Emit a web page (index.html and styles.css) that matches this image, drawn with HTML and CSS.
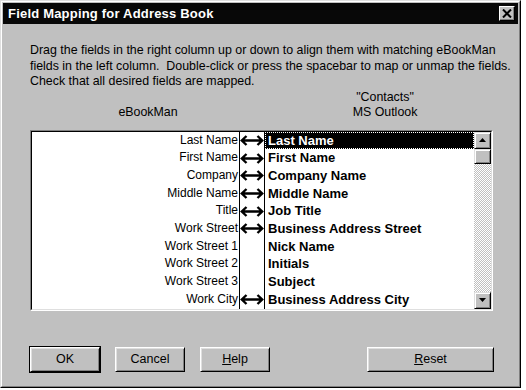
FILE: index.html
```html
<!DOCTYPE html>
<html>
<head>
<meta charset="utf-8">
<link rel="stylesheet" href="styles.css">
</head>
<body>
<div class="window">
  <div class="frame">
    <div class="titlebar">
      <span class="title">Field Mapping for Address Book</span>
      <span class="close">
        <svg width="10" height="9" viewBox="0 0 10 9"><path d="M1 0.5 L9 8.5 M9 0.5 L1 8.5" stroke="#000" stroke-width="2"/></svg>
      </span>
    </div>
    <div class="content">
      <p class="desc">Drag the fields in the right column up or down to align them with matching eBookMan<br>fields in the left column.&nbsp; Double-click or press the spacebar to map or unmap the fields.<br>Check that all desired fields are mapped.</p>
      <div class="headers">
        <div class="hdr"><br>eBookMan</div>
        <div class="hdr">"Contacts"<br>MS Outlook</div>
      </div>
      <div class="listbox">
        <div class="inner">
          <div class="col-left">
            <div class="cell">Last Name</div>
            <div class="cell">First Name</div>
            <div class="cell">Company</div>
            <div class="cell">Middle Name</div>
            <div class="cell">Title</div>
            <div class="cell">Work Street</div>
            <div class="cell">Work Street 1</div>
            <div class="cell">Work Street 2</div>
            <div class="cell">Work Street 3</div>
            <div class="cell">Work City</div>
          </div>
          <div class="col-arrow">
            <div class="cell"><svg class="arr" viewBox="0 0 24 11"><path d="M6.5 1 L1.8 5.5 L6.5 10 M1.8 5.5 H22.2 M17.5 1 L22.2 5.5 L17.5 10" fill="none" stroke="#000" stroke-width="2.4"/></svg></div>
            <div class="cell"><svg class="arr" viewBox="0 0 24 11"><path d="M6.5 1 L1.8 5.5 L6.5 10 M1.8 5.5 H22.2 M17.5 1 L22.2 5.5 L17.5 10" fill="none" stroke="#000" stroke-width="2.4"/></svg></div>
            <div class="cell"><svg class="arr" viewBox="0 0 24 11"><path d="M6.5 1 L1.8 5.5 L6.5 10 M1.8 5.5 H22.2 M17.5 1 L22.2 5.5 L17.5 10" fill="none" stroke="#000" stroke-width="2.4"/></svg></div>
            <div class="cell"><svg class="arr" viewBox="0 0 24 11"><path d="M6.5 1 L1.8 5.5 L6.5 10 M1.8 5.5 H22.2 M17.5 1 L22.2 5.5 L17.5 10" fill="none" stroke="#000" stroke-width="2.4"/></svg></div>
            <div class="cell"><svg class="arr" viewBox="0 0 24 11"><path d="M6.5 1 L1.8 5.5 L6.5 10 M1.8 5.5 H22.2 M17.5 1 L22.2 5.5 L17.5 10" fill="none" stroke="#000" stroke-width="2.4"/></svg></div>
            <div class="cell"><svg class="arr" viewBox="0 0 24 11"><path d="M6.5 1 L1.8 5.5 L6.5 10 M1.8 5.5 H22.2 M17.5 1 L22.2 5.5 L17.5 10" fill="none" stroke="#000" stroke-width="2.4"/></svg></div>
            <div class="cell"></div>
            <div class="cell"></div>
            <div class="cell"></div>
            <div class="cell"><svg class="arr" viewBox="0 0 24 11"><path d="M6.5 1 L1.8 5.5 L6.5 10 M1.8 5.5 H22.2 M17.5 1 L22.2 5.5 L17.5 10" fill="none" stroke="#000" stroke-width="2.4"/></svg></div>
          </div>
          <div class="col-right">
            <div class="cell selected"><span>Last Name</span></div>
            <div class="cell">First Name</div>
            <div class="cell">Company Name</div>
            <div class="cell">Middle Name</div>
            <div class="cell">Job Title</div>
            <div class="cell">Business Address Street</div>
            <div class="cell">Nick Name</div>
            <div class="cell">Initials</div>
            <div class="cell">Subject</div>
            <div class="cell">Business Address City</div>
          </div>
          <div class="scrollbar">
            <div class="sbtn"><svg width="7" height="4" viewBox="0 0 7 4"><path d="M3.5 0 L7 4 L0 4 Z" fill="#000"/></svg></div>
            <div class="thumb"></div>
            <div class="track"></div>
            <div class="sbtn"><svg width="7" height="4" viewBox="0 0 7 4"><path d="M0 0 L7 0 L3.5 4 Z" fill="#000"/></svg></div>
          </div>
        </div>
      </div>
      <div class="buttons">
        <button class="btn default">OK</button>
        <button class="btn">Cancel</button>
        <button class="btn"><u>H</u>elp</button>
        <span class="spacer"></span>
        <button class="btn wide"><u>R</u>eset</button>
      </div>
    </div>
  </div>
</div>
</body>
</html>
```

FILE: styles.css
```css
html, body {
  margin: 0;
  padding: 0;
  background: #fff;
}
body {
  font-family: "Liberation Sans", Arial, sans-serif;
  font-size: 12.4px;
  color: #000;
}
.window {
  width: 519px;
  height: 386px;
  border: 1px solid;
  border-color: #dfdfdf #000 #000 #dfdfdf;
  background: #c0c0c0;
  display: flex;
}
.frame {
  flex: 1;
  border: 1px solid;
  border-color: #fff #808080 #808080 #fff;
  padding: 1px;
  display: flex;
  flex-direction: column;
}
.titlebar {
  height: 21px;
  background: #080808;
  display: flex;
  align-items: center;
  justify-content: space-between;
  padding: 0 3px 0 5px;
}
.title {
  color: #fff;
  font-weight: bold;
  font-size: 13px;
  letter-spacing: 0.2px;
}
.close {
  width: 14px;
  height: 13px;
  background: #c0c0c0;
  border: 1px solid;
  border-color: #fff #000 #000 #fff;
  box-shadow: inset -1px -1px 0 #808080;
  display: flex;
  align-items: center;
  justify-content: center;
}
.content {
  padding: 0 0 0 27px;
  flex: 1;
  display: flex;
  flex-direction: column;
}
.desc {
  margin: 19px 0 0 0;
  line-height: 15.5px;
  white-space: nowrap;
}
.headers {
  display: grid;
  grid-template-columns: 236px 238px;
  line-height: 15.5px;
  text-align: center;
}
.listbox {
  margin-top: 9px;
  width: 461px;
  height: 179px;
  border: 1px solid;
  border-color: #808080 #fff #fff #808080;
}
.inner {
  height: 177px;
  border: 1px solid;
  border-color: #000 #dfdfdf #dfdfdf #000;
  background: #fff;
  display: flex;
}
.cell {
  height: 17.7px;
  line-height: 17.7px;
  white-space: nowrap;
}
.col-left {
  width: 207px;
  border-right: 1px solid #000;
  text-align: right;
  font-size: 12px;
}
.col-left .cell {
  padding-right: 1px;
}
.col-arrow {
  width: 24px;
  border-right: 1px solid #000;
}
.col-arrow .cell {
  display: flex;
  align-items: center;
  justify-content: center;
}
.arr {
  width: 24px;
  height: 11px;
}
.col-right {
  width: 209px;
  font-weight: bold;
  font-size: 13px;
}
.col-right .cell {
  padding-left: 3px;
}
.col-right .selected {
  background: #000;
  color: #fff;
  outline: 1px dotted #fff;
  outline-offset: -1px;
}
.scrollbar {
  width: 17px;
  display: flex;
  flex-direction: column;
}
.sbtn, .thumb {
  box-sizing: border-box;
  width: 17px;
  height: 17px;
  background: #c0c0c0;
  border: 1px solid;
  border-color: #dfdfdf #000 #000 #dfdfdf;
  box-shadow: inset 1px 1px 0 #fff, inset -1px -1px 0 #808080;
  display: flex;
  align-items: center;
  justify-content: center;
}
.thumb {
  height: 15px;
}
.track {
  flex: 1;
  background-color: #fff;
  background-image:
    linear-gradient(45deg, #c0c0c0 25%, transparent 25%, transparent 75%, #c0c0c0 75%),
    linear-gradient(45deg, #c0c0c0 25%, transparent 25%, transparent 75%, #c0c0c0 75%);
  background-size: 2px 2px;
  background-position: 0 0, 1px 1px;
}
.buttons {
  margin-top: 36px;
  display: flex;
  gap: 15px;
  width: 464px;
}
.spacer {
  flex: 1;
}
.btn {
  font-family: "Liberation Sans", Arial, sans-serif;
  font-size: 12.5px;
  color: #000;
  width: 70px;
  height: 25px;
  padding: 0;
  background: #c0c0c0;
  border: 1px solid;
  border-color: #fff #000 #000 #fff;
  box-shadow: inset 1px 1px 0 #dfdfdf, inset -1px -1px 0 #808080;
}
.btn.default {
  outline: 1px solid #000;
  outline-offset: 0;
}
.btn.wide {
  width: 127px;
}
```
